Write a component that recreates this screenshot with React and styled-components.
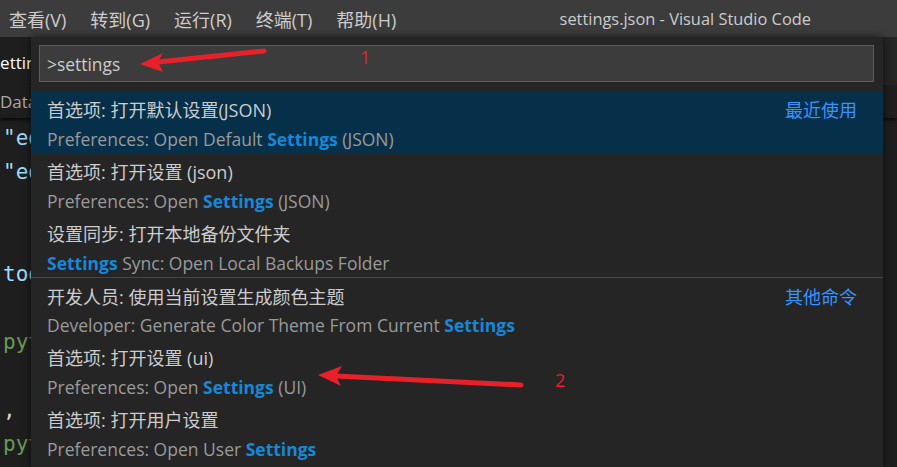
import React from 'react'
import styled, { createGlobalStyle } from 'styled-components'

const UI_FONT = `"Open Sans", "Noto Sans CJK SC", sans-serif`

const GlobalStyle = createGlobalStyle`
  html, body {
    margin: 0;
    padding: 0;
    background: #1e1e1e;
    overflow: hidden;
  }
`

const Window = styled.div`
  position: relative;
  width: 897px;
  height: 467px;
  display: flex;
  flex-direction: column;
  font-family: ${UI_FONT};
  background: #1e1e1e;
  overflow: hidden;
`

const TitleBar = styled.div`
  height: 37px;
  flex-shrink: 0;
  background: #3c3c3c;
  display: flex;
  align-items: center;
  color: #cccccc;
`

const Menu = styled.div`
  display: flex;
  padding-left: 9px;
  gap: 24px;
  font-size: 18px;
`

const MenuItem = styled.span`
  white-space: nowrap;
`

const Title = styled.div`
  margin-left: auto;
  margin-right: 86px;
  white-space: nowrap;
  font-size: 16.4px;
`

const Workbench = styled.div`
  position: relative;
  flex: 1;
  display: flex;
  flex-direction: column;
`

const TabBar = styled.div`
  height: 48px;
  background: #252526;
  display: flex;
`

const Tab = styled.div`
  width: 180px;
  background: #1e1e1e;
  color: #ffffff;
  font-size: 17px;
  display: flex;
  align-items: center;
  padding-top: 3px;
  text-indent: -8px;
  white-space: nowrap;
  overflow: hidden;
`

const Breadcrumbs = styled.div`
  height: 33px;
  background: #1e1e1e;
  color: #a9a9a9;
  font-size: 17px;
  display: flex;
  align-items: center;
  box-shadow: 0 2px 3px rgba(0, 0, 0, 0.7);
  position: relative;
  z-index: 1;
`

const Code = styled.div`
  padding: 3px 0 0 3px;
  font-family: "DejaVu Sans Mono", "Liberation Mono", monospace;
  font-size: 21px;
  line-height: 34px;
`

const Line = styled.div`
  height: 34px;
  white-space: pre;
  color: ${p => p.color || '#d4d4d4'};
`

const QuickPick = styled.div`
  position: absolute;
  top: 0;
  left: 31px;
  width: 852px;
  bottom: 0;
  background: #252526;
  box-shadow: 0 0 8px rgba(0, 0, 0, 0.6);
  z-index: 2;
  display: flex;
  flex-direction: column;
`

const InputWrap = styled.div`
  padding: 8px 9px 9px 8px;
`

const Input = styled.div`
  height: 37px;
  box-sizing: border-box;
  border: 1px solid #0e70c0;
  background: #3c3c3c;
  color: #cccccc;
  font-size: 17.4px;
  display: flex;
  align-items: center;
  padding-left: 7px;
`

const List = styled.div`
  display: flex;
  flex-direction: column;
`

const Row = styled.div`
  height: 62px;
  box-sizing: border-box;
  padding: 3px 26px 0 16px;
  display: flex;
  flex-direction: column;
  background: ${p => (p.selected ? '#062f4a' : 'transparent')};
  border-top: ${p => (p.separator ? '1px solid #474747' : 'none')};
`

const LabelLine = styled.div`
  height: 30px;
  display: flex;
  align-items: center;
  justify-content: space-between;
  color: #cccccc;
  font-size: 18px;
  white-space: nowrap;
`

const Description = styled.div`
  height: 29px;
  display: flex;
  align-items: center;
  color: #9a9a9a;
  font-size: 17.5px;
  white-space: pre;
`

const Highlight = styled.span`
  color: #1688d9;
  font-weight: 700;
`

const GroupLabel = styled.span`
  color: #3794ff;
`

const Annotations = styled.svg`
  position: absolute;
  inset: 0;
  pointer-events: none;
  z-index: 5;
`

const Marker = styled.div`
  position: absolute;
  left: ${p => p.x}px;
  top: ${p => p.y}px;
  color: #e8202a;
  font-size: 18px;
  line-height: 1;
  z-index: 5;
`

const items = [
  {
    label: '首选项: 打开默认设置(JSON)',
    desc: ['Preferences: Open Default ', 'Settings', ' (JSON)'],
    group: '最近使用',
    selected: true,
  },
  {
    label: '首选项: 打开设置 (json)',
    desc: ['Preferences: Open ', 'Settings', ' (JSON)'],
  },
  {
    label: '设置同步: 打开本地备份文件夹',
    desc: ['', 'Settings', ' Sync: Open Local Backups Folder'],
  },
  {
    label: '开发人员: 使用当前设置生成颜色主题',
    desc: ['Developer: Generate Color Theme From Current ', 'Settings', ''],
    group: '其他命令',
    separator: true,
  },
  {
    label: '首选项: 打开设置 (ui)',
    desc: ['Preferences: Open ', 'Settings', ' (UI)'],
  },
  {
    label: '首选项: 打开用户设置',
    desc: ['Preferences: Open User ', 'Settings', ''],
  },
]

const codeLines = [
  { text: '"editor.fontSize": 16,', color: '#9cdcfe' },
  { text: '"editor.tabSize": 4,', color: '#9cdcfe' },
  { text: '' },
  { text: '' },
  { text: 'toolbar', color: '#9cdcfe' },
  { text: '' },
  { text: 'python', color: '#6a9955' },
  { text: '' },
  { text: ',', color: '#d4d4d4' },
  { text: 'python', color: '#6a9955' },
]

const Arrow = ({ tail, notch, tip, upper, lower }) => (
  <g>
    <line
      x1={tail[0]} y1={tail[1]} x2={notch[0]} y2={notch[1]}
      stroke="#e8202a" strokeWidth="5" strokeLinecap="round"
    />
    <polygon
      points={[tip, upper, notch, lower].map(p => p.join(',')).join(' ')}
      fill="#e8202a"
    />
  </g>
)

export default function App () {
  return (
    <Window>
      <GlobalStyle />
      <TitleBar>
        <Menu>
          <MenuItem>查看(V)</MenuItem>
          <MenuItem>转到(G)</MenuItem>
          <MenuItem>运行(R)</MenuItem>
          <MenuItem>终端(T)</MenuItem>
          <MenuItem>帮助(H)</MenuItem>
        </Menu>
        <Title>settings.json - Visual Studio Code</Title>
      </TitleBar>

      <Workbench>
        <TabBar>
          <Tab>settings.json</Tab>
        </TabBar>
        <Breadcrumbs>Data</Breadcrumbs>
        <Code>
          {codeLines.map((l, i) => (
            <Line key={i} color={l.color}>{l.text}</Line>
          ))}
        </Code>

        <QuickPick>
          <InputWrap>
            <Input>&gt;settings</Input>
          </InputWrap>
          <List>
            {items.map((item, i) => (
              <Row key={i} selected={item.selected} separator={item.separator}>
                <LabelLine>
                  <span>{item.label}</span>
                  {item.group && <GroupLabel>{item.group}</GroupLabel>}
                </LabelLine>
                <Description>
                  {item.desc[0]}
                  <Highlight>{item.desc[1]}</Highlight>
                  {item.desc[2]}
                </Description>
              </Row>
            ))}
          </List>
        </QuickPick>
      </Workbench>

      <Annotations width="897" height="467">
        <Arrow tail={[264, 51]} notch={[158, 62]} tip={[140, 64]} upper={[163, 53]} lower={[163, 72]} />
        <Arrow tail={[521, 385]} notch={[336, 376]} tip={[318, 375]} upper={[342, 366]} lower={[341, 386]} />
      </Annotations>
      <Marker x={360} y={48}>1</Marker>
      <Marker x={555} y={371}>2</Marker>
    </Window>
  )
}
